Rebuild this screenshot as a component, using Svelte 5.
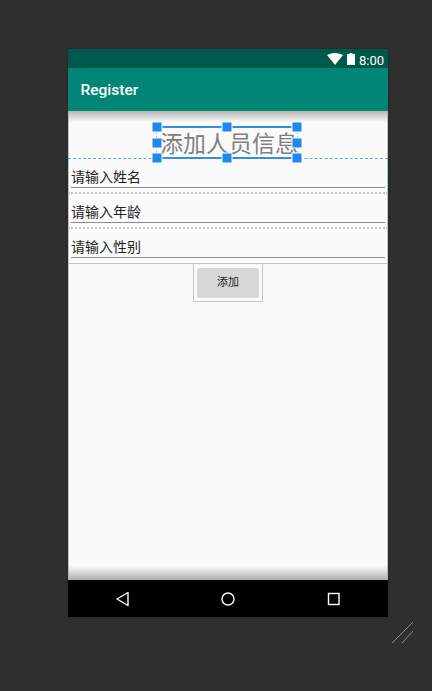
<script>
    const fields = ["请输入姓名", "请输入年龄", "请输入性别"];
    // handles sit just outside the frame lines vertically, so these are css strings
    const top = "-1px";
    const middle = "50%";
    const bottom = "calc(100% + 1px)";
    const handles = [
        ["0", top], ["50%", top], ["100%", top],
        ["0", middle], ["100%", middle],
        ["0", bottom], ["50%", bottom], ["100%", bottom],
    ];
</script>

<div class="canvas">
    <div class="device">
        <div class="status">
            <svg class="wifi" viewBox="0 0 16 12"><path d="M0 2Q8 -2 16 2L8 12Z" fill="#fff" /></svg>
            <svg class="battery" viewBox="0 0 8 12"><path d="M2.500 0h3v1H8v11H0V1h2.500Z" fill="#fff" /></svg>
            <span class="time">8:00</span>
        </div>
        <div class="appbar">Register</div>
        <div class="content">
            <div class="title-wrap">
                <div class="title">
                    <div class="title-text">添加人员信息</div>
                    {#each handles as [x, y]}
                        <span class="handle" style="left: {x}; top: {y}"></span>
                    {/each}
                </div>
            </div>
            <div class="fields">
                {#each fields as field, i}
                    <div class="field" class:first={i === 0} class:last={i === fields.length - 1}>
                        <span class="field-text">{field}</span>
                    </div>
                {/each}
            </div>
            <div class="button-wrap">
                <div class="button-box">
                    <div class="button">添加</div>
                </div>
            </div>
            <div class="shade-top"></div>
            <div class="shade-bottom"></div>
        </div>
        <div class="navbar">
            <svg viewBox="0 0 320 37" width="320" height="37" fill="none" stroke="#fff" stroke-width="1.400">
                <path d="M60 12.500V25.500L49 19Z" stroke-linejoin="round" />
                <circle cx="160" cy="19" r="6" />
                <rect x="260.500" y="13.500" width="10.500" height="11" />
            </svg>
        </div>
    </div>
    <svg class="resize" viewBox="0 0 24 24" fill="none" stroke="#8a8a8a" stroke-width="1">
        <path d="M1 22L22 1M11 22L22 10" />
    </svg>
</div>

<style>
    :global(body) {
        margin: 0;
        background: #2f2f2f;
    }

    .canvas {
        position: relative;
        width: 432px;
        height: 691px;
        padding: 49px 0 0 68px;
        box-sizing: border-box;
        background: #2f2f2f;
        overflow: hidden;
        font-family: Roboto, "Noto Sans CJK SC", sans-serif;
    }

    .device {
        width: 320px;
        height: 568px;
        display: flex;
        flex-direction: column;
        box-shadow: 0 0 2px #222;
    }

    .status {
        height: 19px;
        flex: none;
        background: #00574b;
        display: flex;
        align-items: center;
        justify-content: flex-end;
        gap: 3px;
        padding-right: 4px;
        color: #fff;
        font-size: 13px;
    }

    .wifi {
        width: 16px;
        height: 12px;
        margin-right: 1px;
    }

    .battery {
        width: 8px;
        height: 12px;
        margin-right: 1px;
    }

    .time {
        line-height: 19px;
        padding-top: 3px;
    }

    .appbar {
        height: 43px;
        flex: none;
        box-sizing: border-box;
        background: #008577;
        color: #fff;
        font-size: 15.500px;
        font-weight: 500;
        line-height: 44px;
        padding-left: 12.500px;
    }

    .content {
        position: relative;
        flex: 1;
        background: #fafafa;
        box-shadow: inset 1px 0 0 #c8c8c8, inset -1px 0 0 #c8c8c8;
    }

    .title-wrap {
        position: relative;
        z-index: 1;
        display: flex;
        justify-content: center;
        padding-top: 15px;
        margin-bottom: -1px;
        margin-left: -2px;
    }

    .title {
        position: relative;
        width: 142px;
        height: 33px;
        box-sizing: border-box;
        border-top: 2px solid #2f8fe8;
        border-bottom: 2px solid #2f8fe8;
        border-left: 1px dashed #9cc4ec;
        border-right: 1px dashed #9cc4ec;
    }

    .title-text {
        width: 140px;
        padding-left: 3px;
        box-sizing: border-box;
        font-size: 23px;
        line-height: 33px;
        white-space: nowrap;
        color: #808080;
    }

    .handle {
        position: absolute;
        width: 9px;
        height: 9px;
        transform: translate(-50%, -50%);
        background: #1e88f0;
        box-shadow: 0 0 0 1px #fafafa;
    }

    .fields {
        border-top: 1px dashed #6f9fd0;
    }

    .field {
        height: 35px;
        box-sizing: border-box;
        padding: 0 3px;
        border-bottom: 2px dotted #c4c4c4;
        display: flex;
    }

    .field.first {
        padding: 0 2px;
        border-left: 1px dashed #9cc4ec;
        border-right: 1px dashed #9cc4ec;
    }

    .field.last {
        border-bottom: 1px solid #c4c4c4;
    }

    .field-text {
        flex: 1;
        height: 29px;
        box-sizing: border-box;
        border-bottom: 1px solid #8c8c8c;
        font-size: 14px;
        line-height: 37px;
        color: #1f1f1f;
        white-space: nowrap;
    }

    .button-wrap {
        display: flex;
        justify-content: center;
    }

    .button-box {
        width: 70px;
        height: 38px;
        box-sizing: border-box;
        padding: 3px;
        border: 1px solid #c4c4c4;
        border-top: none;
    }

    .button {
        height: 30px;
        margin-top: 1px;
        background: #d6d7d7;
        border-radius: 2px;
        color: #222;
        font-size: 11px;
        line-height: 30px;
        text-align: center;
    }

    .shade-top,
    .shade-bottom {
        position: absolute;
        left: 0;
        right: 0;
        pointer-events: none;
    }

    .shade-top {
        top: 0;
        height: 11px;
        background: linear-gradient(#b4b4b4, rgba(250, 250, 250, 0));
    }

    .shade-bottom {
        bottom: 0;
        height: 14px;
        background: linear-gradient(rgba(250, 250, 250, 0), #aeaeae);
    }

    .navbar {
        height: 37px;
        flex: none;
        background: #000;
    }

    .navbar svg {
        display: block;
    }

    .resize {
        position: absolute;
        left: 391px;
        top: 621px;
        width: 24px;
        height: 24px;
    }
</style>
